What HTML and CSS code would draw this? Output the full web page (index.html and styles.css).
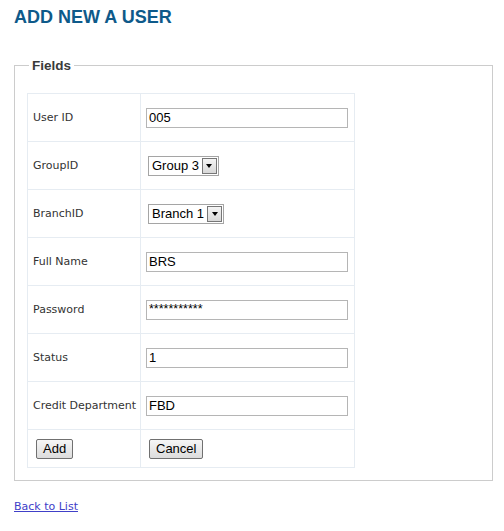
FILE: index.html
```html
<!DOCTYPE html>
<html>
<head>
<meta charset="utf-8">
<link rel="stylesheet" href="styles.css">
</head>
<body>
<h2 class="title">ADD NEW A USER</h2>
<fieldset class="box">
  <legend class="legend">Fields</legend>
  <table class="form">
    <tr><td class="lbl">User ID</td><td class="val"><span class="inp">005</span></td></tr>
    <tr><td class="lbl">GroupID</td><td class="val"><span class="sel"><span class="sel-text">Group 3</span><span class="sel-btn"><span class="tri"></span></span></span></td></tr>
    <tr><td class="lbl">BranchID</td><td class="val"><span class="sel"><span class="sel-text">Branch 1</span><span class="sel-btn"><span class="tri"></span></span></span></td></tr>
    <tr><td class="lbl">Full Name</td><td class="val"><span class="inp">BRS</span></td></tr>
    <tr><td class="lbl">Password</td><td class="val"><span class="inp pw">***********</span></td></tr>
    <tr><td class="lbl">Status</td><td class="val"><span class="inp">1</span></td></tr>
    <tr><td class="lbl">Credit Department</td><td class="val"><span class="inp">FBD</span></td></tr>
    <tr class="btn-row"><td class="lbl"><span class="btn btn-add">Add</span></td><td class="val"><span class="btn btn-cancel">Cancel</span></td></tr>
  </table>
</fieldset>
<p class="back"><a href="#" class="link">Back to List</a></p>
</body>
</html>
```
FILE: styles.css
```css
html, body { margin: 0; padding: 0; background: #fff; }
body { padding: 0 11px 0 14px; font-family: "DejaVu Sans", Verdana, sans-serif; font-size: 11px; color: #333; }
.title { margin: 0; padding-top: 8px; height: 22px; font-family: "Liberation Sans", Arial, sans-serif; font-size: 18px; font-weight: bold; color: #0e5a8a; line-height: 18px; }
.box { margin: 28px 0 0 0; border: 1px solid #cccccc; padding: 20px 12px 12px 12px; }
.legend { margin-left: 2px; padding: 0 3px; font-family: "Liberation Sans", Arial, sans-serif; font-weight: bold; font-size: 13.5px; color: #3a3a3a; }
.form { border-collapse: collapse; border: 1px solid #e6ecf2; table-layout: fixed; width: 328px; }
.form td { border: 1px solid #e6ecf2; height: 47px; padding: 0 5px; vertical-align: middle; }
.lbl { width: 102px; color: #333; white-space: nowrap; }
.val { width: auto; }
.btn-row td { height: 37px; }
.inp { display: block; box-sizing: border-box; width: 202px; height: 20px; border: 1px solid #b5b5b5; font-family: "Liberation Sans", Arial, sans-serif; font-size: 13px; line-height: 18px; padding: 0 2px; color: #000; }
.pw { font-size: 12.5px; line-height: 16px; }
.sel { display: inline-flex; align-items: stretch; height: 20px; box-sizing: border-box; border: 1px solid #a5a5a5; margin-left: 2px; font-family: "Liberation Sans", Arial, sans-serif; font-size: 13px; color: #000; }
.sel-text { padding: 0 2px 0 3px; line-height: 18px; }
.sel-btn { width: 15px; margin: 1px; box-sizing: border-box; border: 1px solid #777; background: linear-gradient(#f4f4f4, #d8d8d8); display: flex; align-items: center; justify-content: center; }
.tri { width: 0; height: 0; border-left: 3.5px solid transparent; border-right: 3.5px solid transparent; border-top: 4px solid #000; }
.btn { display: inline-block; box-sizing: border-box; height: 20px; line-height: 17px; padding: 0 6px; border: 1px solid #707070; border-radius: 2px; background: linear-gradient(#f6f6f6, #dcdcdc); font-family: "Liberation Sans", Arial, sans-serif; font-size: 13px; color: #000; }
.btn-add { margin-left: 3px; }
.btn-cancel { margin-left: 3px; }
.back { margin: 19px 0 0 0; }
.link { color: #4040c8; text-decoration: underline; font-size: 11px; }
```
